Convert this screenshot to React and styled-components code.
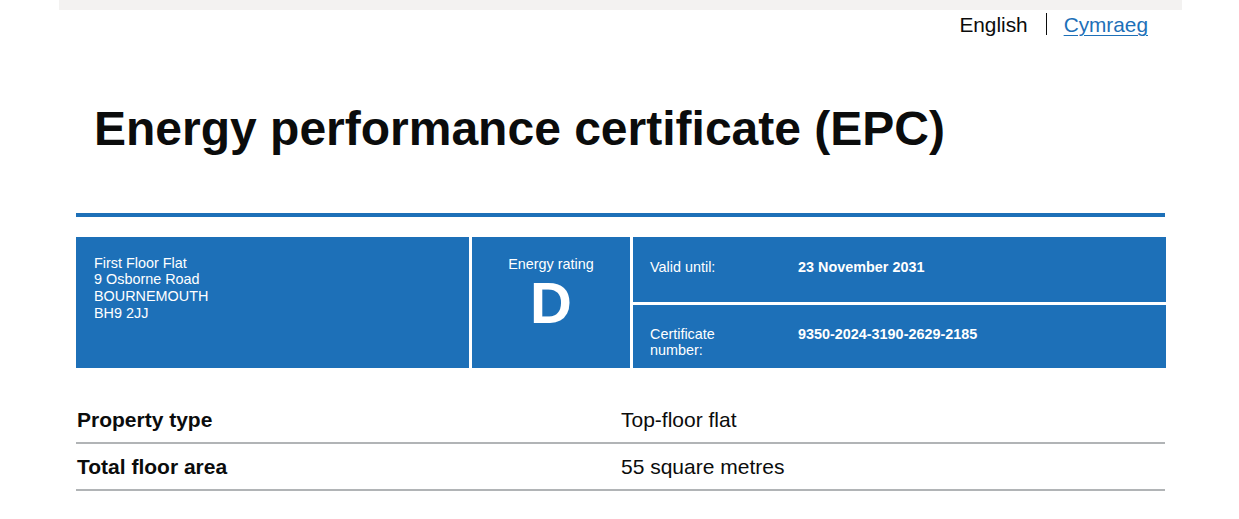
import React from "react";
import styled, { createGlobalStyle } from "styled-components";

const GlobalStyle = createGlobalStyle`
  body {
    margin: 0;
    background: #ffffff;
    font-family: "Liberation Sans", Arial, sans-serif;
    color: #0b0c0c;
  }
`;

const Page = styled.div`
  width: 1123px;
  margin: 0 0 0 59px;
  border-top: 10px solid #f3f2f1;
  padding: 0 17px;
  box-sizing: border-box;
`;

const LangBar = styled.nav`
  display: flex;
  justify-content: flex-end;
  align-items: center;
  margin-top: 2px;
  padding-right: 17px;
  font-size: 20.8px;
  line-height: 25px;
`;

const LangItem = styled.span`
  color: #0b0c0c;
`;

const LangLink = styled.a`
  color: #1d70b8;
  text-decoration: underline;
  text-underline-offset: 3px;
  text-decoration-thickness: 1px;
`;

const LangDivider = styled.span`
  display: inline-block;
  width: 1px;
  height: 22px;
  background: #0b0c0c;
  margin: -2px 17px 0 18px;
`;

const Title = styled.h1`
  margin: 63px 0 0 18px;
  font-size: 48px;
  line-height: 57.6px;
  font-weight: 700;
`;

const Rule = styled.hr`
  margin: 55px 0 0;
  border: 0;
  height: 4px;
  background: #1d70b8;
`;

const Summary = styled.div`
  display: grid;
  grid-template-columns: 393px 158px 533px;
  grid-template-rows: 65px 63px;
  gap: 3px;
  margin-top: 20px;
  color: #ffffff;
  font-size: 14.4px;
  line-height: 16.7px;
`;

const Panel = styled.div`
  background: #1d70b8;
  box-sizing: border-box;
  grid-row: ${(p) => p.$rows || "auto"};
`;

const Address = styled(Panel)`
  padding: 18px 18px;
`;

const Rating = styled(Panel)`
  display: flex;
  flex-direction: column;
  align-items: center;
  padding-top: 19px;
`;

const RatingLetter = styled.div`
  font-size: 58px;
  line-height: 58px;
  font-weight: 700;
  margin-top: 2px;
`;

const Detail = styled(Panel)`
  display: grid;
  grid-template-columns: 148px 1fr;
  padding: ${(p) => p.$pad} 17px 0;
`;

const DetailValue = styled.div`
  font-weight: 700;
`;

const Facts = styled.dl`
  margin: 29px 0 0;
`;

const FactRow = styled.div`
  display: grid;
  grid-template-columns: 544px 1fr;
  padding: 10px 0 10px 1px;
  border-bottom: 2px solid #b1b4b6;
  font-size: 21px;
  line-height: 25px;
`;

const FactKey = styled.dt`
  font-weight: 700;
`;

const FactValue = styled.dd`
  margin: 0;
`;

const facts = [
  ["Property type", "Top-floor flat"],
  ["Total floor area", "55 square metres"],
];

export default function App() {
  return (
    <>
      <GlobalStyle />
      <Page>
        <LangBar>
          <LangItem>English</LangItem>
          <LangDivider />
          <LangLink href="#">Cymraeg</LangLink>
        </LangBar>

        <Title>Energy performance certificate (EPC)</Title>
        <Rule />

        <Summary>
          <Address $rows="1 / 3">
            First Floor Flat
            <br />9 Osborne Road
            <br />BOURNEMOUTH
            <br />BH9 2JJ
          </Address>
          <Rating $rows="1 / 3">
            <div>Energy rating</div>
            <RatingLetter>D</RatingLetter>
          </Rating>
          <Detail $pad="22px">
            <div>Valid until:</div>
            <DetailValue>23 November 2031</DetailValue>
          </Detail>
          <Detail $pad="21px">
            <div>
              Certificate
              <br />
              number:
            </div>
            <DetailValue>9350-2024-3190-2629-2185</DetailValue>
          </Detail>
        </Summary>

        <Facts>
          {facts.map(([key, value]) => (
            <FactRow key={key}>
              <FactKey>{key}</FactKey>
              <FactValue>{value}</FactValue>
            </FactRow>
          ))}
        </Facts>
      </Page>
    </>
  );
}
